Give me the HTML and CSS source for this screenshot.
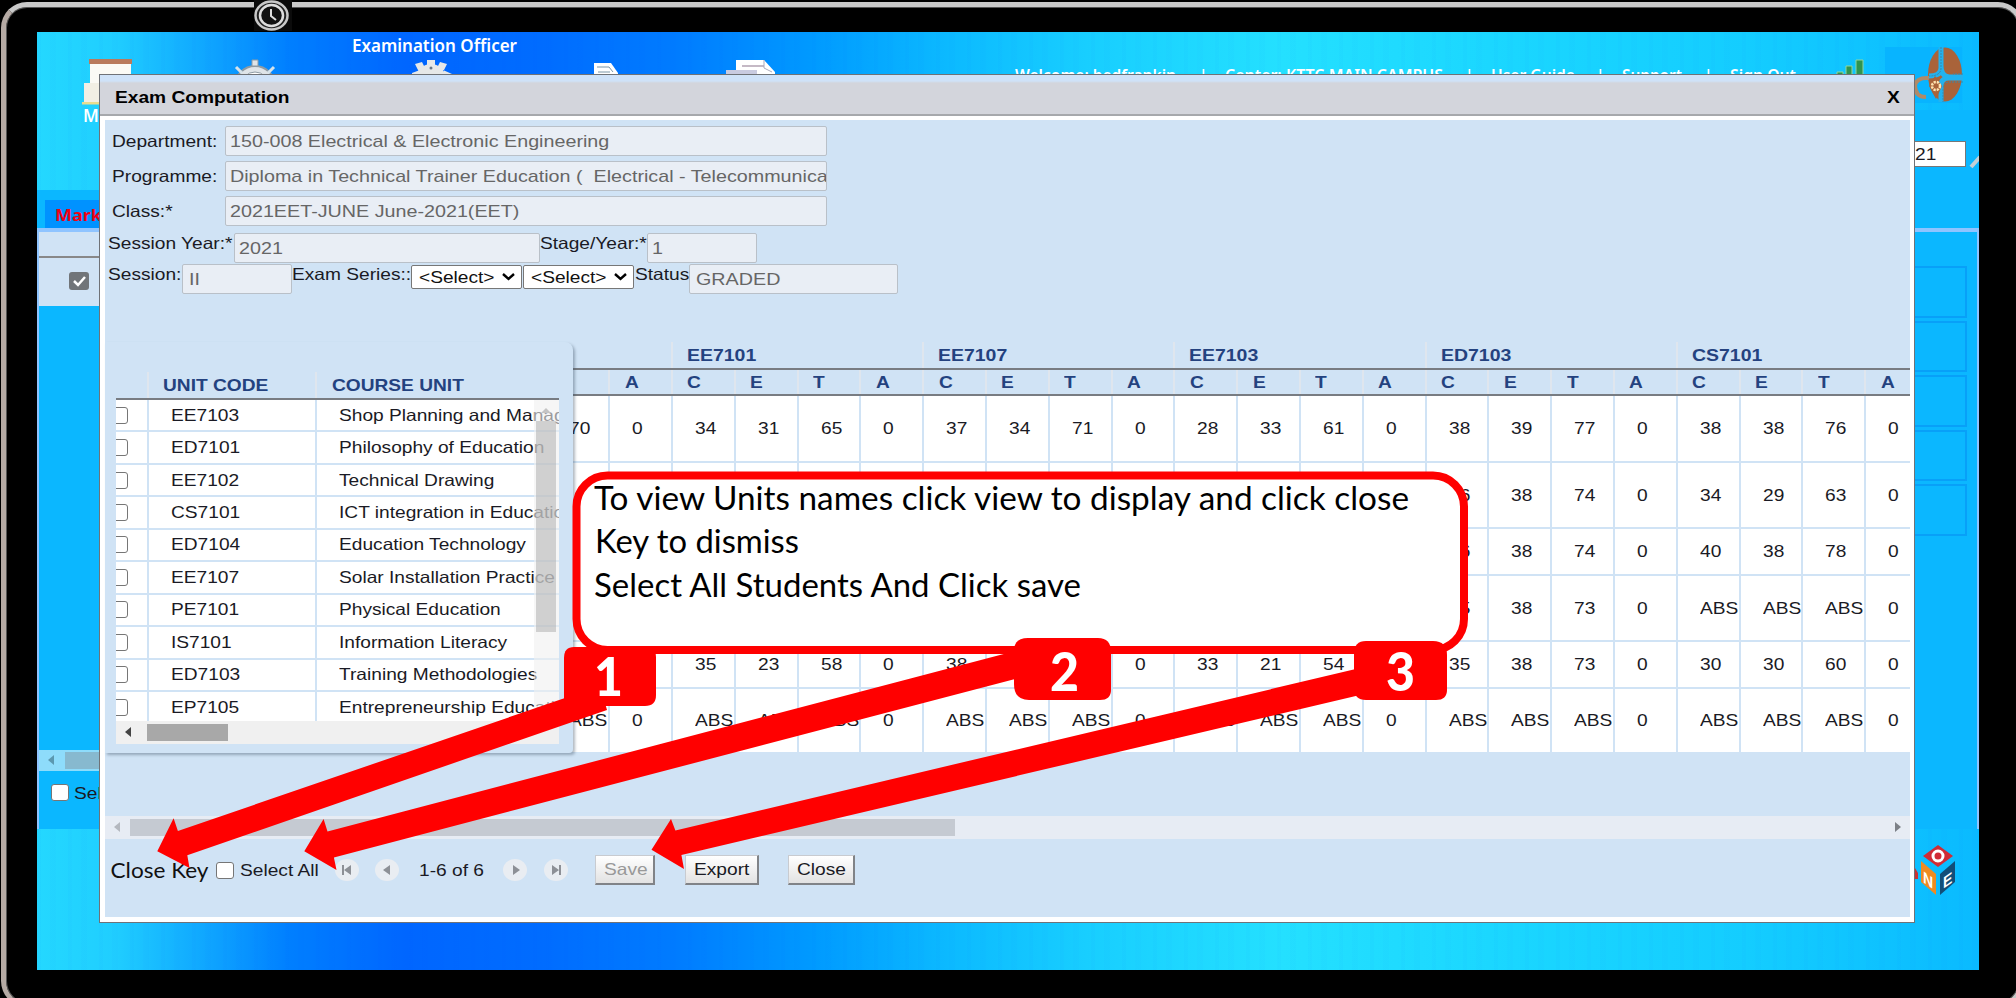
FILE: index.html
```html
<!DOCTYPE html>
<html lang="en">
<head>
<meta charset="utf-8">
<title>Exam Computation</title>
<link rel="stylesheet" href="styles.css">
</head>
<body>
<div class="monitor">
  <div class="screen">
    <header class="banner">
      <svg class="banner-art" width="1942" height="200" viewBox="37 32 1942 200">
        <g class="nav-label">
          <text x="352" y="52" textLength="165" lengthAdjust="spacingAndGlyphs">Examination Officer</text>
          <text x="83" y="122">M</text>
        </g>
        <g class="nav-links">
          <text x="1015" y="81" textLength="161" lengthAdjust="spacingAndGlyphs">Welcome: bedfrankin</text>
          <text x="1199" y="81">|</text>
          <text x="1225" y="81" textLength="218" lengthAdjust="spacingAndGlyphs">Center: KTTC MAIN CAMPUS</text>
          <text x="1465" y="81">|</text>
          <text x="1491" y="81" textLength="84" lengthAdjust="spacingAndGlyphs">User Guide</text>
          <text x="1596" y="81">|</text>
          <text x="1622" y="81" textLength="60" lengthAdjust="spacingAndGlyphs">Support</text>
          <text x="1704" y="81">|</text>
          <text x="1730" y="81" textLength="66" lengthAdjust="spacingAndGlyphs">Sign Out</text>
        </g>
        <path fill="#fbfaf5" d="M90 60h41v44H90z"/><path fill="#b97a5c" d="M89 59h43v5H89z"/><path fill="#f2efe4" d="M84 83h22v20H84z"/><path fill="#e9dc8e" d="M82 102h24v2.500H82z"/>
        <g fill="#dfe4e8" stroke="#8e9aa3"><circle cx="255" cy="86" r="20" stroke-width="2"/><circle cx="255" cy="86" r="14" fill="#fff"/><path d="M252 60h6v6h-6z"/><path d="M236 67l6 6M274 67l-6 6" stroke="#d5e2ea" stroke-width="3"/></g>
        <g fill="#e6e8e8"><circle cx="431" cy="78" r="14"/><path d="M427 60h8v8h-8zM415 64l7-2 4 8-6 4zM447 64l-7-2-4 8 6 4zM412 73l8-3v8h-8zM443 70l9 4-2 4h-8z"/></g><circle cx="431" cy="68" r="1.500" fill="#678"/>
        <path fill="#fff" d="M594 63h17l7 10v6h-24z"/><path d="M597 67h12l4 5M598 72h12" stroke="#7b96a8" fill="none"/>
        <path fill="#fff" d="M736 60h28l11 12v8h-39z"/><path fill="#c9cbe0" d="M726 70h31v6h-31z"/><path d="M742 66h22" stroke="#c5b9c5" stroke-width="2"/><path d="M764 60v8l8 4" stroke="#aab" fill="none"/>
        <g fill="#2f9450" stroke="#8fd6a0"><path d="M1837 72h6v8h-6zM1846 66h6v14h-6zM1856 60h7v20h-7z"/></g>
        <path fill="#08b4ff" d="M1885 47h77v56h-77z"/>
        <ellipse cx="1945" cy="74.500" rx="17" ry="27" fill="#a9633a"/>
        <path d="M1941 47v21q0 8-12 8M1963 78h-14q-8 0-8 8v16M1941 66q0 10 8 11h14" fill="none" stroke="#22b2ef" stroke-width="5"/>
        <path d="M1941 47v21q0 8-12 8M1963 82h-14q-6 0-6 8v12M1963 74h-10" fill="none" stroke="#3c87a6" stroke-width="1" stroke-dasharray="2 1"/>
        <path d="M1929 78q-12-1-14 7 0 12 11 12" fill="none" stroke="#b08a68" stroke-width="4"/>
        <path d="M1929 86l6-10 7 10-6 13z" fill="#a9633a"/>
        <circle cx="1936" cy="86" r="4" fill="none" stroke="#ffe3b0" stroke-width="2.500" stroke-dasharray="2.200 1"/>
        <path d="M1971 167l9-10" stroke="#c5d0d6" stroke-width="4"/>
      </svg>
      <span class="year-box"><span class="t">21</span></span>
    </header>
    <section class="page-body">
      <div class="tab"><span class="t">Mark</span></div>
      <div class="page-grid">
        <div class="page-list">
          <div class="grid-head"></div>
          <div class="grid-row"><svg width="20" height="18" viewBox="0 0 20 18"><rect width="20" height="18" rx="3" fill="#717579"/><path d="M5 9l4 4 7-8" fill="none" stroke="#fff" stroke-width="2.500"/></svg></div>
          <div class="grid-empty"></div>
          <div class="page-scroll"><i></i></div>
          <div class="page-select"><span class="check"></span><span class="t">Select</span></div>
        </div>
        <div class="page-boxes"><i></i><i></i><i></i><i></i><i></i></div>
      </div>
    </section>
    <svg class="one" width="40" height="54" viewBox="1913 842 40 54">
      <path fill="#d02c36" d="M1938 845l15 11-15 11-15-11z"/><circle cx="1938" cy="856" r="5" fill="none" stroke="#fff" stroke-width="3"/>
      <path fill="#ef8b22" d="M1921 861l15 13v21l-15-13z"/><path fill="#124e78" d="M1955 861l-15 13v21l15-13z"/>
      <path fill="#c33" d="M1915 868l3 5v6h-3z"/>
      <text class="one-letter" transform="matrix(1 .7 0 1.15 1923 882)">N</text><text class="one-letter" transform="matrix(1 -.7 0 1.15 1943 889)">E</text>
    </svg>

    <div class="modal">
      <div class="modal-head"><span class="t">Exam Computation</span><span class="t x">X</span></div>
      <div class="modal-body">
        <div class="fields">
          <div class="f wide"><label><span class="t">Department:</span></label><span class="inp"><span class="t">150-008 Electrical &amp; Electronic Engineering</span></span></div>
          <div class="f wide"><label><span class="t">Programme:</span></label><span class="inp"><span class="t">Diploma in Technical Trainer Education (&nbsp; Electrical - Telecommunication )</span></span></div>
          <div class="f wide"><label><span class="t">Class:*</span></label><span class="inp"><span class="t">2021EET-JUNE June-2021(EET)</span></span></div>
          <div class="f line4"><label class="w125"><span class="t">Session Year:*</span></label><span class="inp w306"><span class="t">2021</span></span><label class="w107"><span class="t">Stage/Year:*</span></label><span class="inp w110"><span class="t">1</span></span></div>
          <div class="f line5"><label class="w74"><span class="t">Session:</span></label><span class="inp w110"><span class="t">II</span></span><label class="w118"><span class="t">Exam Series::</span></label><span class="sel"><span class="t">&lt;Select&gt;</span><svg width="13" height="8" viewBox="0 0 13 8"><path d="M1 1l5.500 5L12 1" fill="none" stroke="#000" stroke-width="2.400"/></svg></span><span class="sel"><span class="t">&lt;Select&gt;</span><svg width="13" height="8" viewBox="0 0 13 8"><path d="M1 1l5.500 5L12 1" fill="none" stroke="#000" stroke-width="2.400"/></svg></span><label class="w54"><span class="t">Status</span></label><span class="inp w209"><span class="t">GRADED</span></span></div>
        </div>
        <div class="grades" id="grades"></div>
        <div class="hscroll"><i class="al"></i><b></b><i class="ar"></i></div>
        <div class="footer">
          <svg class="closekey" width="104" height="30"><text x="4.500" y="23" textLength="98" lengthAdjust="spacingAndGlyphs">Close Key</text></svg>
          <span class="check"></span><span class="t selall">Select All</span>
          <svg class="nav n1" width="24" height="22" viewBox="0 0 24 22"><ellipse cx="12" cy="11" rx="12" ry="11"/><path d="M7 6h2v10H7zM16 6v10l-7-5z"/></svg>
          <svg class="nav n2" width="24" height="22" viewBox="0 0 24 22"><ellipse cx="12" cy="11" rx="12" ry="11"/><path d="M15 6v10l-7-5z"/></svg>
          <span class="t count">1-6 of 6</span>
          <svg class="nav n3" width="24" height="22" viewBox="0 0 24 22"><ellipse cx="12" cy="11" rx="12" ry="11"/><path d="M10 6v10l7-5z"/></svg>
          <svg class="nav n4" width="24" height="22" viewBox="0 0 24 22"><ellipse cx="12" cy="11" rx="12" ry="11"/><path d="M15 6h2v10h-2zM8 6v10l7-5z"/></svg>
          <span class="btn save"><span class="t">Save</span></span><span class="btn export"><span class="t">Export</span></span><span class="btn close"><span class="t">Close</span></span>
        </div>
      </div>
      <div class="units">
        <div class="units-view">
          <div class="unit-head"><span class="c0"></span><span class="c1"><span class="t">UNIT CODE</span></span><span class="c2"><span class="t">COURSE UNIT</span></span></div>
          <div class="unit-rows" id="units"></div>
          <div class="vscroll"><b></b></div>
          <div class="uh"><i class="al"></i><b></b></div>
        </div>
      </div>
    </div>
  </div>

  <svg class="notes" width="2016" height="998" viewBox="0 0 2016 998">
    <path fill="#0b0b0b" d="M254 0h38v31h-38z"/>
    <ellipse cx="271.500" cy="15.500" rx="16" ry="14" fill="#222" stroke="#c9c9c9" stroke-width="2.500"/>
    <ellipse cx="271.500" cy="15.500" rx="11.500" ry="10.500" fill="#111" stroke="#ddd" stroke-width="2.500"/>
    <path d="M271 9v7l5 4" fill="none" stroke="#ddd" stroke-width="2"/>
    <rect x="576.500" y="475.500" width="887.500" height="174.500" rx="31" fill="#fff" stroke="#f00" stroke-width="8"/>
    <g class="callout">
      <text x="594" y="510" textLength="815" lengthAdjust="spacingAndGlyphs">To view Units names click view to display and click close</text>
      <text x="595" y="553" textLength="204" lengthAdjust="spacingAndGlyphs">Key to dismiss</text>
      <text x="594" y="597" textLength="487" lengthAdjust="spacingAndGlyphs">Select All Students And Click save</text>
    </g>
    <g fill="#f00">
      <path d="M157.300 851.300L173.600 818.300 177.900 831 600 686 607 710 187.300 855.300 189.500 868z"/>
      <path d="M304.300 851.300L323.600 819 327.500 831.500 1030 647 1030 675 333.900 857.500 336.500 870z"/>
      <path d="M651.500 849.700L671 819 675.400 830.500 1360 668 1360 695 681.400 855 684 869z"/>
      <path d="M574 647h72q10 0 10 10v38q0 11-11 11h-81v-48q0-11 10-11z"/>
      <path d="M1028 638h70q13 0 13 14v38q0 10-11 10h-71q-15 0-15-16v-33q0-13 14-13z"/>
      <path d="M1366 641h67q14 0 14 14v35q0 10-11 10h-70q-12 0-12-12v-34q0-13 12-13z"/>
    </g>
    <g class="badge-no"><text x="594" y="696" textLength="29" lengthAdjust="spacingAndGlyphs">1</text><text x="1050" y="691" textLength="29" lengthAdjust="spacingAndGlyphs">2</text><text x="1386" y="691" textLength="29" lengthAdjust="spacingAndGlyphs">3</text></g>
  </svg>
</div>
<script src="app.js"></script>
</body>
</html>
```
FILE: styles.css
```css
* { box-sizing: border-box; }
body { margin: 0; background: #000; font-family: "Liberation Sans", Arial, sans-serif; font-size: 16.5px; color: #1a1a24; }
.monitor { position: relative; width: 2016px; height: 998px; overflow: hidden; background: #000; padding: 32px 37px 28px; }
.monitor::before { content: ""; position: absolute; left: 1px; top: 2px; width: 2013px; height: 996px; border: 5px solid #c9c9c9; border-left-color: #b5aaa4; border-bottom-width: 4px; border-radius: 26px; box-shadow: inset 0 0 0 1px #555; }
.screen { position: relative; width: 1942px; height: 938px; overflow: hidden; background: linear-gradient(90deg, #24d8ff 0, #20ceff 4%, #10a8ff 8.500%, #007fff 13%, #0066ff 19%, #006cff 26%, #007cff 33%, #009aff 40%, #0cbaff 47%, #18ceff 54%, #24e0ff 64%, #1ad6ff 76%, #14cdff 88%, #0abaff 100%); }
.screen::before { content: ""; position: absolute; inset: 0; background: repeating-linear-gradient(90deg, rgba(0,60,255,.02) 0 4px, transparent 4px 13px, rgba(0,60,255,.015) 13px 19px, transparent 19px 31px); }
.t { display: inline-block; white-space: pre; transform: scaleX(1.16); transform-origin: 0 50%; }

.banner { position: relative; height: 158px; display: flex; justify-content: flex-end; padding: 109px 13px 0 0; }
.banner::after { content: ""; position: absolute; right: 0; top: 78px; width: 66px; height: 80px; background: #0bb7ff; }
.banner-art { position: absolute; left: 0; top: 0; z-index: 1; }
.nav-label { font: 600 17px "Noto Sans", sans-serif; fill: #fff; }
.nav-links { font: 600 15.500px "Noto Sans", sans-serif; fill: #fff; }
.year-box { z-index: 2; width: 150px; height: 26px; background: #fff; border: 1px solid #777; padding: 3px 0 0 98px; }
.page-body { position: relative; height: 639px; background: #0bb7ff; padding-top: 10px; }
.tab { width: 200px; height: 28px; margin-left: 8px; background: #0092ff; color: #f00014; font: bold 15.500px "Noto Sans", sans-serif; padding: 4px 0 0 10px; }
.page-grid { height: 601px; border: solid #8fc4ff; border-width: 4px 2px 0; display: flex; justify-content: space-between; }
.page-list { width: 300px; }
.grid-head { height: 26px; background: #d0e3f5; border-bottom: 2px solid #888; }
.grid-row { height: 48px; background: #d0e3f5; padding: 14px 0 0 30px; }
.grid-empty { height: 444px; }
.page-scroll { position: relative; height: 21px; background: #8edcfb; padding: 2px 0 2px 26px; }
.page-scroll i { display: block; height: 17px; background: #87b9cf; }
.page-scroll::before { content: ""; position: absolute; left: 9px; top: 5px; border: 5px solid transparent; border-right: 6px solid #5b98b0; border-left: 0; }
.page-select { display: flex; align-items: flex-start; gap: 5px; padding: 13px 0 0 12px; }
.check { display: inline-block; width: 18px; height: 17px; background: #fff; border: 1.500px solid #767676; border-radius: 3px; flex: none; }
.page-boxes { width: 140px; padding: 34px 10px 0 0; display: flex; flex-direction: column; gap: 3px; }
.page-boxes i { height: 51.500px; border: 2px solid #08a0f8; }
.one { position: absolute; left: 1876px; top: 810px; overflow: visible; }
.one-letter { font: bold 14px "Liberation Sans", sans-serif; fill: #fff; }

.modal { position: absolute; z-index: 3; left: 62px; top: 42px; width: 1816px; height: 849px; border: 1.500px solid #6f7277; background: #fff; }
.modal-head { height: 41px; background: linear-gradient(#cfe2f8 0 6px, #d3d5dc 8px); border-bottom: 2px solid #a6a8ac; display: flex; justify-content: space-between; align-items: center; padding: 6px 15.500px 0 14.500px; font-weight: bold; color: #000; }
.modal-body { height: 797px; margin: 4px 4px 5px 5px; background: #d0e3f5; overflow: hidden; }
.fields { height: 222px; padding: 6px 0 0 3px; }
.f { display: flex; height: 35px; }
.f label { flex: none; padding-top: 6px; }
.wide label { width: 116.500px; padding-left: 4px; }
.inp { flex: none; width: 602px; height: 30px; background: #e9eef5; border: 1.500px solid #b9c0c8; border-radius: 2px; color: #666; font-size: 17px; padding: 5px 4px; overflow: hidden; }
.line4 { height: 34px; padding-top: 2px; }
.line4 label { padding-top: 1px; }
.line5 { margin-top: -1px; }
.line5 label { padding-top: 1px; }
.w125 { width: 125.500px; } .inp.w306 { width: 306px; } .w107 { width: 107px; } .inp.w110 { width: 110px; }
.w74 { width: 74px; } .w118 { width: 119px; } .w54 { width: 54px; } .inp.w209 { width: 209px; }
.line5 .inp { padding-left: 6px; }
.sel { width: 111px; height: 24px; margin: 1px 1px 0 0; background: #fff; border: 1.500px solid #777; border-radius: 2px; padding: 0 6px 0 7px; display: flex; align-items: center; justify-content: space-between; color: #111; }

.grades { height: 474px; padding-left: 439.500px; }
.grp { display: flex; width: 1400px; height: 28px; border-bottom: 2px solid #787c82; color: #24427f; font-weight: bold; font-size: 16.800px; }
.grp span.g { flex: none; width: 251.200px; border-left: 2px solid #dfe6ee; padding: 4px 0 0 14px; }
.grp span.g.first { width: 126.500px; border: 0; }
.row { display: flex; width: 1400px; background: #fff; border-bottom: 2px solid #d0e3f5; }
.row > span { flex: none; width: 62.800px; border-left: 2px solid #d0e3f5; padding-left: 22px; display: flex; align-items: center; }
.row > span:first-child { width: 63.700px; }
.row.sub { height: 26px; background: #d0e3f5; border-bottom: 2px solid #787c82; color: #24427f; font-weight: bold; }
.row.sub > span { border-left-color: #dfe6ee; padding-left: 14.500px; }
.hscroll { position: relative; height: 22.500px; background: #e7ecf4; padding: 3px 0 3px 25px; }
.hscroll b { display: block; width: 825px; height: 17px; background: #c5cad2; }
.al, .ar { position: absolute; top: 6px; left: 9px; border: 5px solid transparent; border-right: 6px solid #b4b8bf; border-left: 0; }
.ar { left: auto; right: 9px; border-right: 0; border-left: 6px solid #7c8087; }

.footer { display: flex; align-items: center; height: 62px; padding: 1px 0 0 1px; }
.closekey { flex: none; margin-right: 5.500px; font: 21px Lato, sans-serif; fill: #111; }
.selall { width: 90px; margin-left: 6px; margin-right: 5px; }
.nav { flex: none; margin-right: 16.500px; fill: #8d9096; }
.nav ellipse { fill: #e9edf2; }
.n2 { margin-right: 20px; }
.count { width: 84px; }
.n4 { margin-right: 27px; }
.btn { height: 30px; border: 1.500px solid #c8cbd0; border-right: 2px solid #808387; border-bottom: 2px solid #808387; background: linear-gradient(#fff, #e2e2e2); padding: 3.500px 0 0 8px; flex: none; }
.save { width: 60px; color: #999; margin-right: 30px; } .export { width: 74px; margin-right: 29.500px; padding-left: 8px; } .close { width: 67px; }

.units { position: absolute; left: 5px; top: 267px; width: 468px; height: 411px; background: #d0e3f5; box-shadow: 2px 2px 3px rgba(60,80,100,.4); border-radius: 0 8px 4px 0; padding-left: 11px; }
.units-view { position: relative; width: 443px; height: 402px; overflow: hidden; }
.unit-head { display: flex; height: 58px; padding-top: 30px; border-bottom: 2px solid #787c82; color: #24427f; font-weight: bold; }
.unit-head > span { padding-top: 4px; height: 26px; }
.c0 { flex: none; width: 31px; overflow: hidden; }
.c1 { flex: none; width: 168px; border-left: 2px solid #dfe6ee; padding-left: 14px; }
.c2 { flex: 1 0 300px; border-left: 2px solid #dfe6ee; padding-left: 15px; }
.unit-row { display: flex; height: 32.450px; }
.unit-row > span { background: #fff; border-bottom: 2px solid #d0e3f5; display: flex; align-items: center; border-left-color: #d0e3f5; }
.unit-row .c1 { padding-left: 22px; } .unit-row .c2 { padding-left: 22px; }
.unit-row .check { margin-left: -7px; width: 19px; }
.vscroll { position: absolute; right: 0; top: 58px; width: 25px; height: 322px; background: rgba(240,240,240,.6); padding: 21px 3px 0 2px; }
.vscroll b { display: block; height: 211px; background: rgba(170,170,170,.5); }
.vscroll::before { content: ""; position: absolute; left: 7px; top: 8px; border: 5px solid transparent; border-bottom: 5px solid #c4c4c4; border-top: 0; }
.uh { position: absolute; left: 0; bottom: 0; width: 443px; height: 23px; background: #f0f0f0; padding: 3px 0 0 31px; }
.uh b { display: block; width: 81px; height: 17px; background: #a8a8a8; }
.uh .al { border-right-color: #444; }

.notes { position: absolute; left: 0; top: 0; z-index: 5; }
.callout { font: 33px Lato, sans-serif; fill: #000; }
.badge-no { font: 900 53px Lato, sans-serif; fill: #fff; }
```
FILE: app.js
```js
const t = s => `<span class="t">${s}</span>`;

const units = [
  ["EE7103", "Shop Planning and Management"], ["ED7101", "Philosophy of Education"],
  ["EE7102", "Technical Drawing"], ["CS7101", "ICT integration in Education"],
  ["ED7104", "Education Technology"], ["EE7107", "Solar Installation Practice"],
  ["PE7101", "Physical Education"], ["IS7101", "Information Literacy"],
  ["ED7103", "Training Methodologies"], ["EP7105", "Entrepreneurship Education"]
];
document.getElementById("units").innerHTML = units.map(([code, name]) =>
  `<div class="unit-row"><span class="c0"><i class="check"></i></span><span class="c1">${t(code)}</span><span class="c2">${t(name)}</span></div>`).join("");

const rows = [
  [67, "70 0 34 31 65 0 37 34 71 0 28 33 61 0 38 39 77 0 38 38 76 0"],
  [66.2, "- - - - - - - - - - - - - - 36 38 74 0 34 29 63 0"],
  [47, "- - - - - - - - - - - - - - 36 38 74 0 40 38 78 0"],
  [66.3, "- - - - - - - - - - - - - - 35 38 73 0 ABS ABS ABS 0"],
  [46.7, "- - 35 23 58 0 38 - - 0 33 21 54 0 35 38 73 0 30 30 60 0"],
  [65.3, "ABS 0 ABS ABS ABS 0 ABS ABS ABS 0 ABS ABS ABS 0 ABS ABS ABS 0 ABS ABS ABS 0"]
];
const groups = ["EE7101", "EE7107", "EE7103", "ED7103", "CS7101"];
const sub = ["T", "A"].concat(...groups.map(() => ["C", "E", "T", "A"]));
document.getElementById("grades").innerHTML =
  `<div class="grp"><span class="g first"></span>${groups.map(g => `<span class="g">${t(g)}</span>`).join("")}</div>` +
  `<div class="row sub">${sub.map(s => `<span>${t(s)}</span>`).join("")}</div>` +
  rows.map(([h, cells]) => `<div class="row" style="height:${h}px">${cells.split(" ").map(c => `<span>${c === "-" ? "" : t(c)}</span>`).join("")}</div>`).join("");
```
